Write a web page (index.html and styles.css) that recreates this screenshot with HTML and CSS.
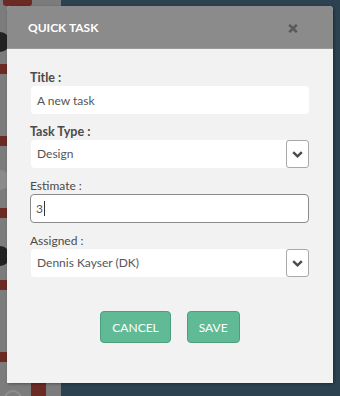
FILE: index.html
```html
<!DOCTYPE html>
<html lang="en">
<head>
    <meta charset="UTF-8">
    <meta name="viewport" content="width=device-width, initial-scale=1.0">
    <title>Quick Task</title>
    <link rel="stylesheet" href="styles.css">
</head>
<body>
    <div class="app">
        <!-- dimmed sidebar behind the dialog -->
        <aside class="sidebar">
            <div class="stripe"></div>
            <div class="stripe"></div>
            <div class="stripe"></div>
            <div class="stripe"></div>
            <div class="stripe"></div>
            <div class="avatar a1"></div>
            <div class="avatar a2"></div>
            <div class="avatar a3"></div>
            <div class="top-tab"></div>
            <div class="bar"></div>
            <div class="ring"></div>
        </aside>
        <main class="board"></main>
    </div>

    <div class="modal">
        <div class="modal-header">
            <h2>QUICK TASK</h2>
            <span class="close">
                <svg width="10" height="9" viewBox="0 0 10 9"><path d="M1.2 0.8 L8.8 8.2 M8.8 0.8 L1.2 8.2" stroke="#5a5a5a" stroke-width="2.6"/></svg>
            </span>
        </div>
        <form class="modal-body">
            <div class="field">
                <label class="strong">Title :</label>
                <div class="input">A new task</div>
            </div>
            <div class="field">
                <label class="strong">Task Type :</label>
                <div class="select">
                    <span class="value">Design</span>
                    <span class="arrow">
                        <svg width="11" height="7" viewBox="0 0 11 7"><path d="M1.2 1.2 L5.5 5.3 L9.8 1.2" fill="none" stroke="#4a4a4a" stroke-width="2.4"/></svg>
                    </span>
                </div>
            </div>
            <div class="field">
                <label>Estimate :</label>
                <div class="input focused">3<span class="caret"></span></div>
            </div>
            <div class="field">
                <label>Assigned :</label>
                <div class="select">
                    <span class="value">Dennis Kayser (DK)</span>
                    <span class="arrow">
                        <svg width="11" height="7" viewBox="0 0 11 7"><path d="M1.2 1.2 L5.5 5.3 L9.8 1.2" fill="none" stroke="#4a4a4a" stroke-width="2.4"/></svg>
                    </span>
                </div>
            </div>
            <div class="actions">
                <button type="button" class="btn">CANCEL</button>
                <button type="submit" class="btn">SAVE</button>
            </div>
        </form>
    </div>
</body>
</html>
```

FILE: styles.css
```css
body {
    margin: 0;
    padding: 0;
    font-family: Lato, "Open Sans", sans-serif;
    overflow: hidden;
}
.app {
    display: flex;
    height: 396px;
}
.sidebar {
    position: relative;
    width: 61px;
    background-color: #7c7c7c;
}
.stripe {
    position: absolute;
    left: 0;
    width: 7px;
    height: 10px;
    background-color: #6c2a25;
}
.stripe:nth-child(1) { top: 64px; }
.stripe:nth-child(2) { top: 136px; }
.stripe:nth-child(3) { top: 208px; }
.stripe:nth-child(4) { top: 280px; }
.stripe:nth-child(5) { top: 352px; }
.avatar {
    position: absolute;
    left: -10px;
    width: 20px;
    height: 20px;
    border-radius: 50%;
    background-color: #222;
}
.a1 { top: 32px; }
.a2 { top: 170px; background-color: #8a8a8a; }
.a3 { top: 246px; }
.top-tab {
    position: absolute;
    top: 0;
    left: 3px;
    width: 29px;
    height: 6px;
    background-color: #6c2a25;
    border-radius: 0 0 3px 3px;
}
.bar {
    position: absolute;
    left: 31px;
    bottom: 0;
    width: 15px;
    height: 14px;
    background-color: #6c2a25;
}
.ring {
    position: absolute;
    left: 4px;
    bottom: -12px;
    width: 14px;
    height: 14px;
    border: 2px solid #8e8e8e;
    border-radius: 50%;
}
.board {
    flex: 1;
    background-color: #2c4251;
}
.modal {
    position: absolute;
    top: 6px;
    left: 7px;
    width: 326px;
    height: 377px;
    background-color: #f2f2f2;
    border-radius: 4px 4px 0 0;
    box-shadow: 1px 1px 3px rgba(0, 0, 0, 0.35);
    overflow: hidden;
}
.modal-header {
    height: 42px;
    background-color: #8b8b8b;
    border-bottom: 1px solid #9a9a9a;
    display: flex;
    align-items: center;
    justify-content: space-between;
    padding: 0 35px 0 21px;
}
.modal-header h2 {
    margin: 0;
    color: white;
    font-size: 12px;
    font-weight: bold;
    padding-top: 1px;
}
.close {
    display: flex;
    padding-top: 3px;
}
.modal-body {
    padding: 21px 24px 0 24px;
}
.field {
    display: flex;
    flex-direction: column;
    margin-bottom: 10px;
}
label {
    font-size: 12px;
    line-height: 16px;
    color: #4a4a4a;
    margin-left: -1px;
}
label.strong {
    font-weight: bold;
    font-size: 12.5px;
}
.input {
    height: 28px;
    background-color: white;
    border-radius: 4px;
    padding-left: 6px;
    font-size: 12px;
    color: #555;
    box-sizing: border-box;
    display: flex;
    align-items: center;
}
.input.focused {
    height: 29px;
    border: 1px solid #8a8a8a;
    padding-left: 5px;
    margin-left: -1px;
}
.caret {
    display: inline-block;
    width: 1px;
    height: 15px;
    background-color: #333;
    margin-left: 1px;
}
.select {
    height: 28px;
    display: flex;
    align-items: stretch;
}
.select .value {
    flex: 1;
    background-color: white;
    border-radius: 4px 0 0 4px;
    padding-left: 6px;
    font-size: 12px;
    line-height: 28px;
    color: #555;
}
.select .arrow {
    width: 21px;
    border: 1px solid #a9a9a9;
    border-radius: 3px;
    background-color: white;
    display: flex;
    align-items: center;
    justify-content: center;
}
.actions {
    display: flex;
    justify-content: center;
    gap: 16px;
    margin-top: 34px;
}
.btn {
    height: 32px;
    padding: 0 11px;
    background-color: #61ba96;
    border: 1px solid #4c9e7f;
    border-radius: 4px;
    color: white;
    font-family: Lato, sans-serif;
    font-size: 12px;
    cursor: pointer;
}
.btn:hover {
    background-color: #52a886;
}
```
